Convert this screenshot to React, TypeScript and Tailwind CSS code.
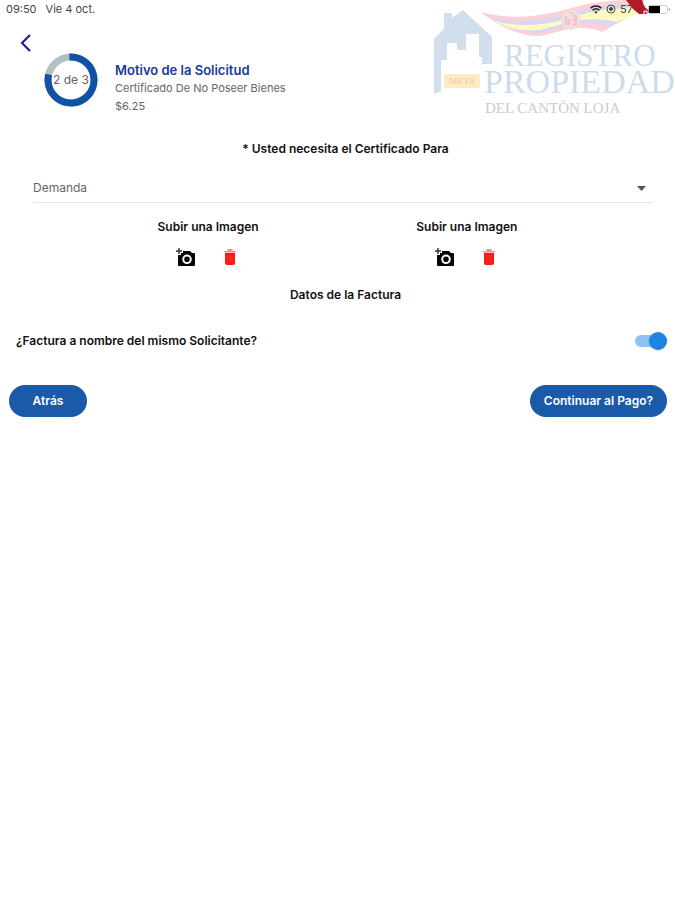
import { useState } from "react";

function RegistryLogo() {
  return (
    <svg
      className="pointer-events-none absolute top-0 right-0 h-[120px] w-[245px]"
      viewBox="430 0 245 120"
      role="img"
      aria-label="Registro Propiedad del Cantón Loja"
    >
      <path
        d="M434 94V39L444 29V13H452V18L463 10L492 37V64H482V57H479V34H466V50H457V43H447V60H441V91Z"
        fill="#d0deee"
      />
      <rect x="444" y="74" width="36" height="14" fill="#fdebc4" />
      <text x="462" y="84" textAnchor="middle" fontSize="9" fill="#f6cdb2" fontFamily="Liberation Serif, serif" fontWeight="700">
        META
      </text>
      <path d="M480 12C520 22 550 14 575 7C600 0 620 0 645 0L640 10L602 32C580 22 560 32 540 36C520 37 500 26 480 12Z" fill="#fbd0d6" />
      <path d="M490 17C525 26 555 17 578 11C600 5 620 4 642 4L638 12L610 27C590 19 565 26 540 33C520 33 505 26 490 17Z" fill="#d9d8ee" />
      <path d="M494 21C530 30 560 22 580 15C600 9 620 8 645 7L636 14L617 22C590 15 565 23 540 30C520 32 505 27 494 21Z" fill="#fffac4" />
      <circle cx="571" cy="20" r="10" fill="#efdfe1" />
      <path d="M566 16V24H569V20H566M573 16H576V25H572M573 20H576M569 13H573" fill="none" stroke="#f3bcc2" strokeWidth="1.5" />
      <g fontFamily="Liberation Serif, serif">
        <text x="504" y="66" fontSize="31" fill="#cddcec">REGISTRO</text>
        <text x="484" y="93" fontSize="34" fill="#cddcec">PROPIEDAD</text>
        <text x="485" y="113" fontSize="15" fill="#cccccc">DEL CANTÒN LOJA</text>
      </g>
    </svg>
  );
}

function StatusBar() {
  return (
    <div className="relative flex h-[18px] items-center justify-between pr-1 pl-[6px] text-[#444]">
      <div className="flex gap-[9px] text-[11px]">
        <span>09:50</span>
        <span>Vie 4 oct.</span>
      </div>
      <div className="flex items-center gap-1 text-[11px]">
        <svg className="h-[9px] w-3" viewBox="0 0 12 9" fill="none" stroke="#222" strokeWidth="1.6" aria-hidden="true">
          <path d="M.6 3.2C3.6.3 8.400.3 11.400 3.200M2.600 5.300C4.600 3.500 7.400 3.500 9.400 5.300" />
          <path d="M4.300 6.800L6 8.800L7.700 6.800C6.700 6 5.300 6 4.300 6.800Z" fill="#222" stroke="none" />
        </svg>
        <svg className="h-[10px] w-[10px]" viewBox="0 0 10 10" fill="none" stroke="#444" aria-hidden="true">
          <circle cx="5" cy="5" r="4" />
          <circle cx="5" cy="5" r="1.500" fill="#444" />
        </svg>
        <span className="w-6 whitespace-nowrap">57 %</span>
        <svg className="h-[9px] w-[23px]" viewBox="0 0 23 9" aria-hidden="true">
          <rect x=".5" y=".5" width="19" height="8" rx="2" fill="#fff" stroke="#ccc" />
          <path d="M1 1H12V8H1Z" fill="#000" />
          <path d="M21 3V6C22.500 5.500 22.500 3.500 21 3Z" fill="#999" />
        </svg>
      </div>
      <svg className="absolute top-0 right-[25px] h-[15px] w-[24px]" viewBox="0 0 24 15" aria-hidden="true">
        <path d="M0 0H16L18 6L23 11L21 14H13L7 9Z" fill="#b01c25" />
        <path d="M18 14V11H21V14" stroke="#fff" strokeWidth="1" fill="none" />
      </svg>
    </div>
  );
}

function ProgressRing() {
  return (
    <div className="relative flex size-[54px] items-center justify-center">
      <svg className="absolute inset-0" viewBox="0 0 54 54" fill="none" strokeWidth="7" aria-hidden="true">
        <circle cx="27" cy="27" r="23" stroke="#b0c1c6" />
        <circle cx="27" cy="27" r="23" stroke="#1053a4" pathLength="100" strokeDasharray="80 20" transform="rotate(-94 27 27)" />
      </svg>
      <span className="relative whitespace-nowrap text-xs text-[#666]">2 de 3</span>
    </div>
  );
}

function ImageUpload() {
  return (
    <div className="flex flex-col items-center gap-[10px]">
      <h3 className="text-xs leading-5 font-semibold">Subir una Imagen</h3>
      <div className="flex gap-6">
        <button type="button" aria-label="Agregar foto" className="size-5">
          <svg viewBox="0 0 20 20" aria-hidden="true">
            <path d="M3 1V7M0 4H6" stroke="#333" strokeWidth="1.400" />
            <path
              fillRule="evenodd"
              d="M7 4H14L16 6H18Q19 6 19 7V18Q19 19 18 19H3Q2 19 2 18V8H5V6H7ZM11 7.500A4.800 4.800 0 1 0 11 17.100A4.800 4.800 0 1 0 11 7.500ZM11 9.500A2.800 2.800 0 1 1 11 15.100A2.800 2.800 0 1 1 11 9.500Z"
              fill="#050505"
            />
          </svg>
        </button>
        <button type="button" aria-label="Eliminar imagen" className="size-5">
          <svg viewBox="0 0 20 20" aria-hidden="true">
            <path d="M4 4H16V5.500H4ZM7.500 2H12.500V4H7.500Z" fill="#ff8a80" />
            <path d="M5 6H15V16Q15 18 13 18H7Q5 18 5 16Z" fill="#fb1a13" />
            <path d="M8 8V15M10 8V15M12 8V15" stroke="#e93a32" strokeWidth=".8" />
          </svg>
        </button>
      </div>
    </div>
  );
}

export default function App() {
  const [sameName, setSameName] = useState(true);
  return (
    <main className="relative min-h-screen bg-white font-['Inter',sans-serif] text-[#111]">
      <RegistryLogo />
      <StatusBar />
      <header className="flex pt-[15px] pl-[18px]">
        <button type="button" aria-label="Volver" className="h-5 w-4">
          <svg viewBox="0 0 16 20" fill="none" stroke="#201d9c" strokeWidth="2.200" aria-hidden="true">
            <path d="M12 2L4 10L12 18" />
          </svg>
        </button>
        <div className="flex items-center gap-[17px] pt-3 pl-[10px]">
          <ProgressRing />
          <div className="pt-4 text-[11px] leading-[18px] text-[#666]">
            <h1 className="text-[13px] leading-[18px] font-semibold text-[#16399b]">Motivo de la Solicitud</h1>
            <p>Certificado De No Poseer Bienes</p>
            <p>$6.25</p>
          </div>
        </div>
      </header>
      <section className="pt-6">
        <label htmlFor="motivo" className="block pl-4 text-center text-xs leading-5 font-semibold">
          * Usted necesita el Certificado Para
        </label>
        <div className="relative mt-[15px] mr-[23px] ml-[33px] border-b border-[#e4e4e4]">
          <select id="motivo" className="block h-7 w-full appearance-none bg-transparent text-xs text-[#666]">
            <option>Demanda</option>
          </select>
          <svg className="pointer-events-none absolute top-3 right-[6px] h-[5px] w-[9px]" viewBox="0 0 9 5" aria-hidden="true">
            <path d="M0 0H9L4.500 5Z" fill="#555" />
          </svg>
        </div>
      </section>
      <section className="flex justify-evenly pt-[14px]">
        <ImageUpload />
        <ImageUpload />
      </section>
      <h2 className="pt-[18px] pl-4 text-center text-xs leading-5 font-semibold">Datos de la Factura</h2>
      <div className="flex items-center justify-between pt-[26px] pr-2 pl-4">
        <label htmlFor="mismo" className="text-xs leading-5 font-semibold">
          ¿Factura a nombre del mismo Solicitante?
        </label>
        <input
          id="mismo"
          type="checkbox"
          role="switch"
          checked={sameName}
          onChange={(e) => setSameName(e.target.checked)}
          className="relative h-3 w-8 appearance-none rounded-full bg-gray-300 before:absolute before:-top-[3px] before:left-0 before:size-[18px] before:rounded-full before:bg-gray-100 before:shadow checked:bg-[#8fc2f1] checked:before:left-[14px] checked:before:bg-[#1e83e2]"
        />
      </div>
      <div className="flex justify-between pt-[34px] pr-2 pl-[9px] text-xs font-semibold text-white">
        <button type="button" className="h-8 w-[78px] rounded-full bg-[#1b59a9]">Atrás</button>
        <button type="button" className="h-8 rounded-full bg-[#1b59a9] px-[14px]">Continuar al Pago?</button>
      </div>
    </main>
  );
}
